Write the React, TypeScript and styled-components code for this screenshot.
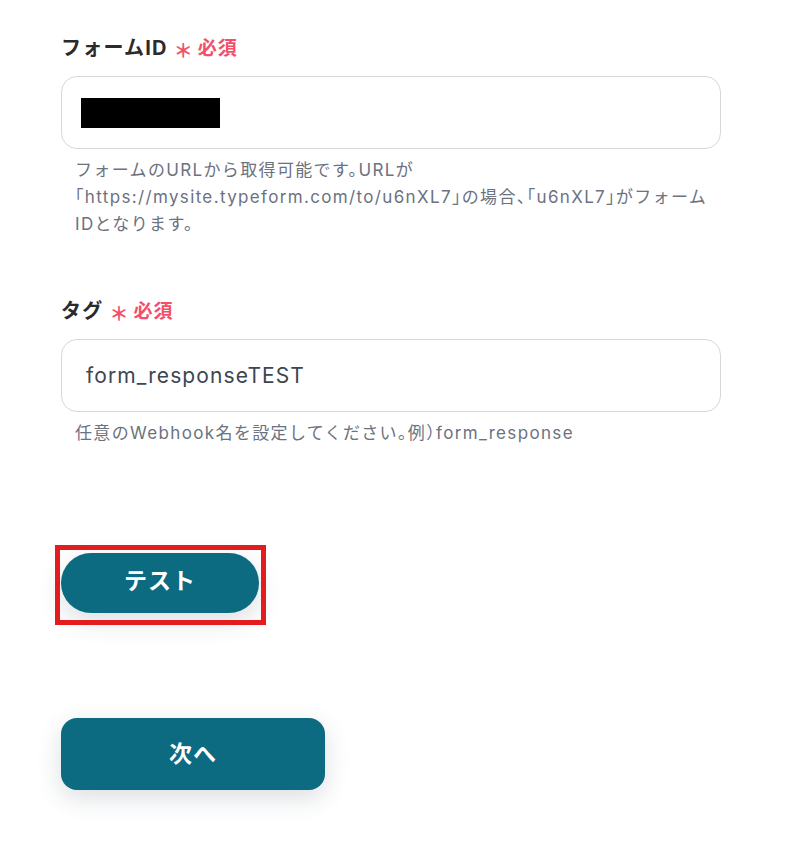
import React from "react";
import styled, { createGlobalStyle } from "styled-components";

const Global = createGlobalStyle`
  html, body { margin: 0; padding: 0; background: #ffffff; }
  body { font-family: "Inter", "Noto Sans CJK JP", sans-serif; }
`;

const Page = styled.div`
  width: 660px;
  padding: 31px 0 40px 61px;
  display: flex;
  flex-direction: column;
`;

const Field = styled.div<{ $gapTop?: number }>`
  display: flex;
  flex-direction: column;
  margin-top: ${(p) => p.$gapTop ?? 0}px;
`;

const Label = styled.div`
  display: flex;
  align-items: center;
  height: 30px;
  font-size: 20px;
  font-weight: 700;
  letter-spacing: 1.2px;
  color: #2b2b2b;
  font-family: "Inter", "Noto Sans CJK JP", sans-serif;
`;

const Req = styled.span`
  display: inline-flex;
  align-items: center;
  margin-left: 6px;
  color: #f2506a;
  font-size: 19px;
  font-weight: 700;
  letter-spacing: 1px;
  font-family: "Noto Sans CJK JP", sans-serif;
`;

const Star = styled.span`
  font-size: 19px;
  margin-right: 4px;
  position: relative;
  top: 3px;
  font-family: "Noto Sans CJK JP", sans-serif;
`;

const InputBox = styled.div`
  margin-top: 15px;
  box-sizing: border-box;
  height: 73px;
  border: 1px solid #d5d8dd;
  border-radius: 16px;
  display: flex;
  align-items: center;
  padding: 0 24px 0 19px;
  font-size: 21px;
  letter-spacing: 1.1px;
  color: #3c4652;
  font-family: "Inter", "Noto Sans CJK JP", sans-serif;
`;

const Masked = styled.div`
  width: 139px;
  height: 30px;
  background: #000;
`;

const InputText = styled.span`
  padding-left: 5px;
`;

const Help = styled.div`
  margin-top: 8px;
  padding-left: 14px;
  font-size: 17px;
  line-height: 27px;
  letter-spacing: 1.35px;
  white-space: nowrap;
  font-feature-settings: "halt";
  color: #6b7280;
  font-family: "Inter", "Noto Sans CJK JP", sans-serif;
`;

const ButtonWrap = styled.div<{ $gapTop: number }>`
  position: relative;
  align-self: flex-start;
  margin-top: ${(p) => p.$gapTop}px;
`;

const Button = styled.button<{ $w: number; $h: number; $r: number; $lift: number }>`
  width: ${(p) => p.$w}px;
  height: ${(p) => p.$h}px;
  border-radius: ${(p) => p.$r}px;
  border: none;
  background: #0c6a81;
  color: #ffffff;
  font-size: 23px;
  font-weight: 700;
  letter-spacing: 1px;
  font-family: "Noto Sans CJK JP", sans-serif;
  box-shadow: 0 8px 24px rgba(30, 50, 70, 0.16);
  display: flex;
  align-items: center;
  justify-content: center;
  padding: 0 0 ${(p) => p.$lift}px;
  cursor: pointer;
`;

const Highlight = styled.div`
  position: absolute;
  left: -6px;
  top: -8px;
  width: 211px;
  height: 80px;
  box-sizing: border-box;
  border: 5px solid #e31c1f;
  pointer-events: none;
`;

export default function App() {
  return (
    <>
      <Global />
      <Page>
        <Field>
          <Label>
            フォームID
            <Req>
              <Star>＊</Star>必須
            </Req>
          </Label>
          <InputBox>
            <Masked />
          </InputBox>
          <Help>
            フォームのURLから取得可能です。URLが
            <br />
            「https://mysite.typeform.com/to/u6nXL7」の場合、「u6nXL7」がフォーム
            <br />
            IDとなります。
          </Help>
        </Field>
        <Field $gapTop={56}>
          <Label>
            タグ
            <Req>
              <Star>＊</Star>必須
            </Req>
          </Label>
          <InputBox>
            <InputText>form_responseTEST</InputText>
          </InputBox>
          <Help>任意のWebhook名を設定してください。例）form_response</Help>
        </Field>
        <ButtonWrap $gapTop={106}>
          <Button $w={198} $h={60} $r={30} $lift={8}>テスト</Button>
          <Highlight />
        </ButtonWrap>
        <ButtonWrap $gapTop={105}>
          <Button $w={264} $h={72} $r={16} $lift={4}>次へ</Button>
        </ButtonWrap>
      </Page>
    </>
  );
}
